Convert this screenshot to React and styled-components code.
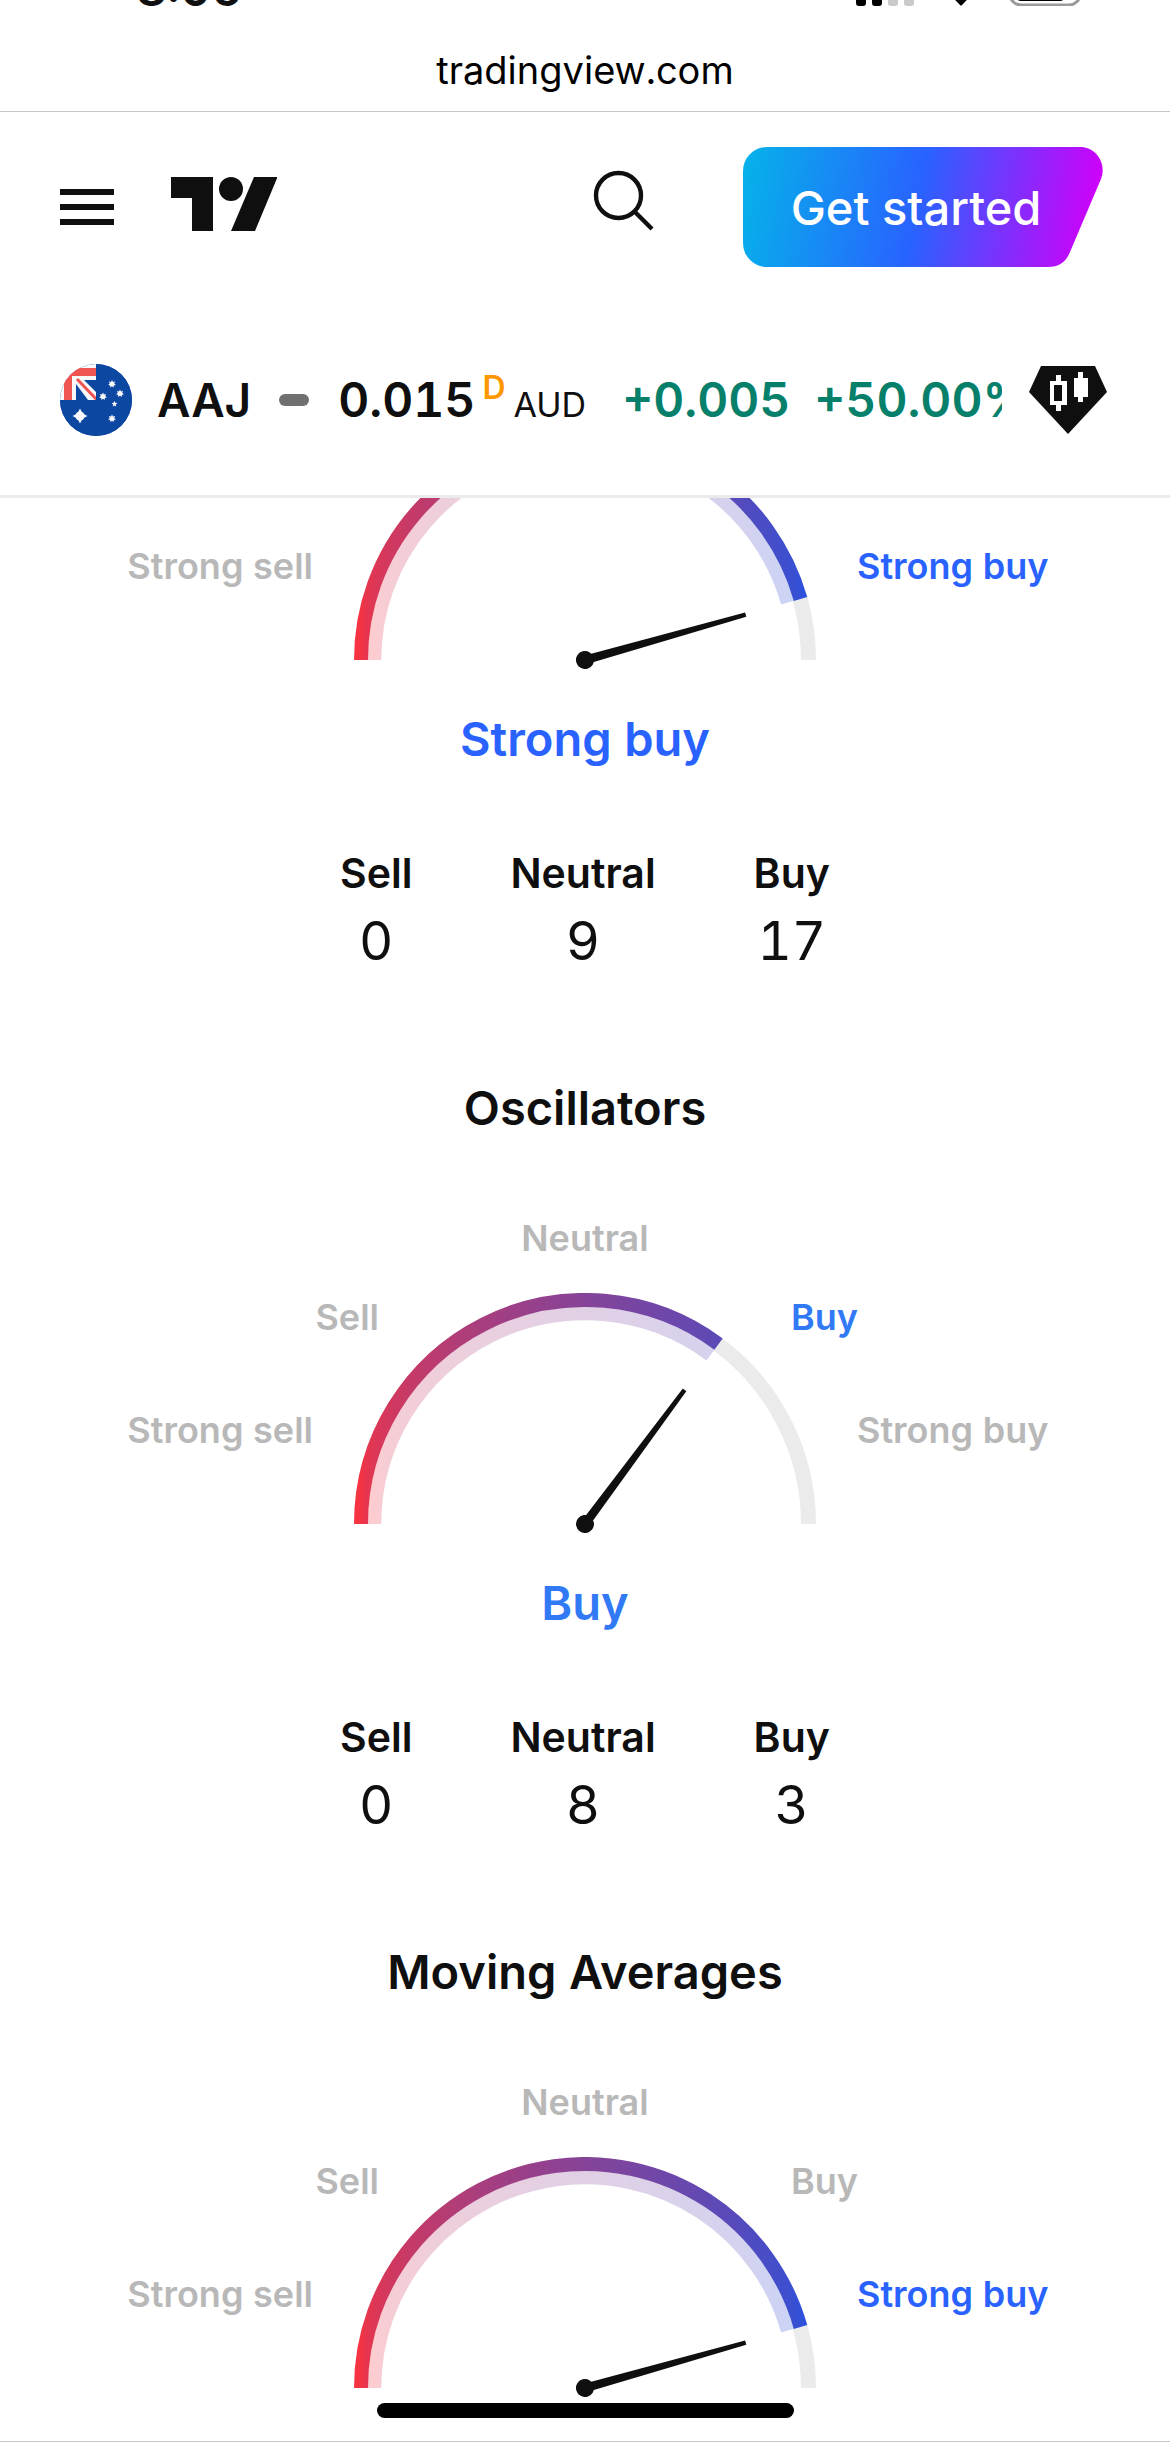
import { useState } from "react";
import styled, { createGlobalStyle } from "styled-components";

const GlobalStyle = createGlobalStyle`
  * {
    box-sizing: border-box;
  }
  body {
    margin: 0;
    background: #fff;
    color: #0f0f0f;
    font-family: Inter, "Liberation Sans", sans-serif;
    font-variant-numeric: tabular-nums;
  }
`;

const ALL_LABELS = ["Strong sell", "Sell", "Neutral", "Buy", "Strong buy"];

// row / column in the meter grid
const LABEL_CELLS = {
  "Strong sell": { area: "3 / 1", justify: "end" },
  Sell: { area: "2 / 1 / 3 / 3", justify: "end" },
  Neutral: { area: "1 / 3", justify: "center" },
  Buy: { area: "2 / 4 / 3 / 6", justify: "start" },
  "Strong buy": { area: "3 / 5", justify: "start" },
};

const RATING_COLORS = {
  Buy: "#3179f5",
  "Strong buy": "#2962ff",
};

const GAUGES = [
  {
    id: "summary",
    labels: ["Strong sell", "Strong buy"],
    rating: "Strong buy",
    angle: 15.8,
    counts: { Sell: 0, Neutral: 9, Buy: 17 },
  },
  {
    id: "oscillators",
    title: "Oscillators",
    labels: ALL_LABELS,
    rating: "Buy",
    angle: 53.4,
    counts: { Sell: 0, Neutral: 8, Buy: 3 },
  },
  {
    id: "averages",
    title: "Moving Averages",
    labels: ALL_LABELS,
    rating: "Strong buy",
    angle: 15.8,
  },
];

const RED = [246, 51, 67];
const PURPLE = [133, 67, 152];
const BLUE = [33, 83, 228];

const mix = (a, b, t) => `rgb(${a.map((v, i) => Math.round(v + (b[i] - v) * t)).join(",")})`;

// the colour follows the angle, so stops are placed at the x of each angle
const STOPS = Array.from({ length: 19 }, (_, i) => {
  const t = i / 18;
  return {
    offset: (1 - Math.cos(Math.PI * t)) / 2,
    color: t < 0.5 ? mix(RED, PURPLE, t * 2) : mix(PURPLE, BLUE, t * 2 - 1),
  };
});

const arc = (r, from, to) => {
  const point = (deg) => {
    const rad = (deg * Math.PI) / 180;
    return `${231 + r * Math.cos(rad)} ${231 - r * Math.sin(rad)}`;
  };
  return `M${point(from)} A${r} ${r} 0 0 1 ${point(to)}`;
};

const star = (cx, cy, r, inner, points) =>
  Array.from({ length: points * 2 }, (_, i) => {
    const a = (Math.PI * i) / points;
    const d = i % 2 ? inner : r;
    return `${cx + d * Math.sin(a)},${cy - d * Math.cos(a)}`;
  }).join(" ");

function ArcGradient({ id, r }) {
  return (
    <linearGradient id={id} gradientUnits="userSpaceOnUse" x1={231 - r} y1="0" x2={231 + r} y2="0">
      {STOPS.map((stop) => (
        <stop key={stop.offset} offset={stop.offset} stopColor={stop.color} />
      ))}
    </linearGradient>
  );
}

function Dial({ id, angle }) {
  return (
    <DialSvg width="462" height="240" viewBox="0 0 462 240" aria-hidden="true">
      <defs>
        <ArcGradient id={`${id}-outer`} r={224} />
        <ArcGradient id={`${id}-inner`} r={210.5} />
      </defs>
      <g fill="none">
        <path d={arc(223.5, angle, 0)} stroke="#ebebeb" strokeWidth="15" />
        <path d={arc(210.5, 180, angle)} stroke={`url(#${id}-inner)`} strokeWidth="13.5" opacity="0.25" />
        <path d={arc(224, 180, angle)} stroke={`url(#${id}-outer)`} strokeWidth="14" />
      </g>
      <g fill="#0f0f0f" transform={`rotate(${-angle} 231 231)`}>
        <path d="M231 226.5 L398 228.8 V233.2 L231 235.5 Z" />
        <circle cx="231" cy="231" r="9" />
      </g>
    </DialSvg>
  );
}

function Gauge({ gauge }) {
  return (
    <Section>
      {gauge.title && <Title>{gauge.title}</Title>}
      <Meter>
        {gauge.labels.map((name) => (
          <Label
            key={name}
            $area={LABEL_CELLS[name].area}
            $justify={LABEL_CELLS[name].justify}
            $color={name === gauge.rating ? RATING_COLORS[name] : "#b8b8b8"}
          >
            {name}
          </Label>
        ))}
        <Dial id={gauge.id} angle={gauge.angle} />
      </Meter>
      {gauge.counts && (
        <>
          <Rating $color={RATING_COLORS[gauge.rating]}>{gauge.rating}</Rating>
          <Counters>
            {Object.entries(gauge.counts).map(([name, count]) => (
              <Counter key={name}>
                <dt>{name}</dt>
                <dd>{count}</dd>
              </Counter>
            ))}
          </Counters>
        </>
      )}
    </Section>
  );
}

function StatusIcons() {
  return (
    <svg width="230" height="36" viewBox="0 0 230 36" aria-hidden="true">
      <rect x="3" y="22" width="10" height="14" rx="3" />
      <rect x="19" y="16" width="10" height="20" rx="3" />
      <rect x="35" y="9" width="10" height="27" rx="3" fill="#cacaca" />
      <rect x="51" y="0" width="10" height="36" rx="3" fill="#cacaca" />
      <path d="M84 11 Q108 -9 132 11 L109 35 Q108 36 107 35 Z" />
      <rect x="157" y="2" width="70" height="33" rx="11" fill="none" stroke="#9a9a9a" strokeWidth="3" />
      <rect x="162" y="7" width="51" height="24" rx="6" />
    </svg>
  );
}

function FlagIcon() {
  return (
    <svg width="72" height="72" viewBox="0 0 72 72" role="img" aria-label="Australia">
      <clipPath id="flag">
        <circle cx="36" cy="36" r="36" />
      </clipPath>
      <g clipPath="url(#flag)">
        <path fill="#0c47a1" d="M0 0h72v72H0z" />
        <path fill="#f8f8fb" d="M0 0h36v36H0z" />
        <path fill="#f05350" d="M4 4h32v8H12v24H4z" />
        <path fill="#0c47a1" d="M16 20v16h12zM24 16h12v12z" />
        <path stroke="#f05350" strokeWidth="3" d="M17 15l21 22" />
      </g>
      <path fill="#0c47a1" d="M36 0v36H0a36 36 0 1 0 36-36z" />
      <g fill="#f8f8fb">
        <polygon points={star(20, 52, 7.5, 3.6, 4)} />
        <circle cx="20" cy="52" r="4.6" />
        <polygon points={star(52, 20, 4, 2.3, 7)} />
        <polygon points={star(60, 29.5, 4, 2.3, 7)} />
        <polygon points={star(43, 32.5, 4, 2.3, 7)} />
        <polygon points={star(54.5, 40, 3, 1.4, 5)} />
        <polygon points={star(52, 54.5, 4, 2.3, 7)} />
      </g>
    </svg>
  );
}

function GemIcon() {
  return (
    <svg width="78" height="70" viewBox="0 0 78 70" aria-hidden="true">
      <path fill="#0f0f0f" d="M12 1h54l12 26-39 42L0 27z" />
      <path fill="#fff" d="M27 10h5v6h6v24h-6v6h-5v-6h-6V16h6zM49 7h5v6h5v19h-5v5h-5v-5h-4V13h4z" />
      <path fill="#0f0f0f" d="M25 20h8v16h-8z" />
    </svg>
  );
}

export default function App() {
  const [menuOpen, setMenuOpen] = useState(false);

  return (
    <>
      <GlobalStyle />
      <Screen>
        <TopArea>
          <StatusBar>
            <Clock>8:06</Clock>
            <StatusIcons />
          </StatusBar>
          <Address>tradingview.com</Address>
          <Header>
            <IconButton
              type="button"
              aria-label="Open menu"
              aria-expanded={menuOpen}
              onClick={() => setMenuOpen(!menuOpen)}
            >
              <svg width="54" height="36" viewBox="0 0 54 36">
                <path fill="#0f0f0f" d="M0 0h54v6H0zM0 15h54v6H0zM0 30h54v6H0z" />
              </svg>
            </IconButton>
            <Logo href="#" aria-label="TradingView main page">
              <svg width="106" height="60" viewBox="0 0 106 60">
                <path fill="#0f0f0f" d="M0 0h42v54H21V21H0zM83 0h23.500L84 54H60z" />
                <circle cx="60" cy="12" r="12" fill="#0f0f0f" />
              </svg>
            </Logo>
            <IconButton type="button" aria-label="Search">
              <svg width="62" height="74" viewBox="0 0 62 74" fill="none" stroke="#0f0f0f" strokeWidth="4.400">
                <circle cx="25.500" cy="25.500" r="22.500" />
                <path d="M42 42l17 17" />
              </svg>
            </IconButton>
            <StartButton type="button">
              <StartShape viewBox="0 0 360 120" aria-hidden="true">
                <defs>
                  <linearGradient id="start" gradientUnits="userSpaceOnUse" x1="0" y1="38" x2="348" y2="98">
                    <stop offset="0" stopColor="#06b0ea" />
                    <stop offset="0.5" stopColor="#2962ff" />
                    <stop offset="1" stopColor="#cf00fa" />
                  </linearGradient>
                </defs>
                <path
                  fill="url(#start)"
                  d="M24 0H337C353 0 364 16 358 32L327 105C323 115 316 120 305 120H24A24 24 0 0 1 0 96V24A24 24 0 0 1 24 0Z"
                />
              </StartShape>
              <span>Get started</span>
            </StartButton>
          </Header>
          <SymbolBar>
            <FlagIcon />
            <Ticker>AAJ</Ticker>
            <MarketStatus title="Market closed" />
            <Price>
              0.015<Delay>D</Delay>
              <Currency>AUD</Currency>
            </Price>
            <Change>
              <span>+0.005</span>
              <span>+50.00%</span>
            </Change>
            <IconButton type="button" aria-label="Open chart">
              <GemIcon />
            </IconButton>
          </SymbolBar>
        </TopArea>
        <Content>
          {GAUGES.map((gauge) => (
            <Gauge key={gauge.id} gauge={gauge} />
          ))}
        </Content>
        <HomeIndicator />
      </Screen>
    </>
  );
}

const Screen = styled.div`
  position: relative;
  display: flex;
  flex-direction: column;
  min-height: 100vh;
  border-bottom: 1px solid #c8c8c8;
`;

const TopArea = styled.div`
  flex: none;
  background: #fff;
  border-bottom: 3px solid #ebebeb;
`;

const StatusBar = styled.div`
  display: flex;
  align-items: flex-end;
  justify-content: space-between;
  height: 6px;
  padding: 0 87px 0 136px;
`;

const Clock = styled.span`
  font-size: 48px;
  line-height: 34px;
  font-weight: 600;
`;

const Address = styled.div`
  height: 106px;
  padding-top: 40px;
  border-bottom: 1px solid #c8c8c8;
  text-align: center;
  color: #000;
  font-size: 38px;
  line-height: 48px;
`;

const Header = styled.header`
  display: flex;
  align-items: center;
  height: 190px;
  padding: 0 67px 0 60px;
`;

const IconButton = styled.button`
  display: flex;
  flex: none;
  padding: 0;
  border: none;
  background: none;
  cursor: pointer;
`;

const Logo = styled.a`
  display: flex;
  margin: 0 auto 0 57px;
`;

const StartButton = styled.button`
  position: relative;
  width: 360px;
  height: 120px;
  margin-left: 88px;
  padding: 0 14px 0 0;
  border: none;
  background: none;
  color: #fff;
  font-family: inherit;
  font-size: 47px;
  font-weight: 500;
  cursor: pointer;
  span {
    position: relative;
  }
`;

const StartShape = styled.svg`
  position: absolute;
  inset: 0;
`;

const SymbolBar = styled.div`
  display: flex;
  align-items: center;
  height: 193px;
  padding: 2px 63px 0 60px;
  font-size: 48px;
  font-weight: 600;
  white-space: nowrap;
`;

const Ticker = styled.span`
  margin-left: 25px;
  font-size: 46px;
`;

const MarketStatus = styled.span`
  flex: none;
  width: 30px;
  height: 12px;
  margin: 0 29px 0 28px;
  border-radius: 6px;
  background: #707070;
`;

const Price = styled.span`
  display: flex;
  align-items: baseline;
`;

const Delay = styled.span`
  align-self: flex-start;
  margin: 0 8px 0 7px;
  color: #ff9800;
  font-size: 32px;
  line-height: 36px;
`;

const Currency = styled.span`
  font-size: 34px;
  font-weight: 400;
`;

const Change = styled.span`
  display: flex;
  flex: 1;
  gap: 24px;
  min-width: 0;
  margin: 0 27px 0 36px;
  overflow: hidden;
  color: #06806b;
`;

const Content = styled.main`
  flex: 1;
  overflow: hidden;
`;

const Section = styled.section`
  display: flex;
  flex-direction: column;
  align-items: center;
  margin-bottom: 99px;
  &:first-child {
    margin-top: -148px;
  }
  &:last-child {
    margin-bottom: 0;
  }
`;

const Title = styled.h2`
  margin: 0 0 76px;
  font-size: 47px;
  font-weight: 600;
  line-height: 60px;
`;

const Meter = styled.div`
  display: grid;
  grid-template-columns: 1fr 66px 412px 66px 1fr;
  grid-template-rows: 79px 113px 126px;
  width: 100%;
`;

const Label = styled.span`
  grid-area: ${({ $area }) => $area};
  justify-self: ${({ $justify }) => $justify};
  color: ${({ $color }) => $color};
  font-size: 36px;
  font-weight: 600;
  line-height: 48px;
`;

const DialSvg = styled.svg`
  grid-area: 2 / 2 / 4 / 5;
  justify-self: center;
`;

const Rating = styled.div`
  margin: 41px 0 74px;
  color: ${({ $color }) => $color};
  font-size: 47px;
  font-weight: 600;
  line-height: 60px;
`;

const Counters = styled.dl`
  display: flex;
  gap: 98px;
  margin: 0;
`;

const Counter = styled.div`
  text-align: center;
  dt {
    font-size: 41px;
    font-weight: 600;
    line-height: 60px;
  }
  dd {
    margin: 0;
    font-size: 53px;
    line-height: 76px;
  }
`;

const HomeIndicator = styled.div`
  position: absolute;
  bottom: 23px;
  left: 50%;
  width: 417px;
  height: 15px;
  margin-left: -208px;
  border-radius: 8px;
  background: #000;
`;
